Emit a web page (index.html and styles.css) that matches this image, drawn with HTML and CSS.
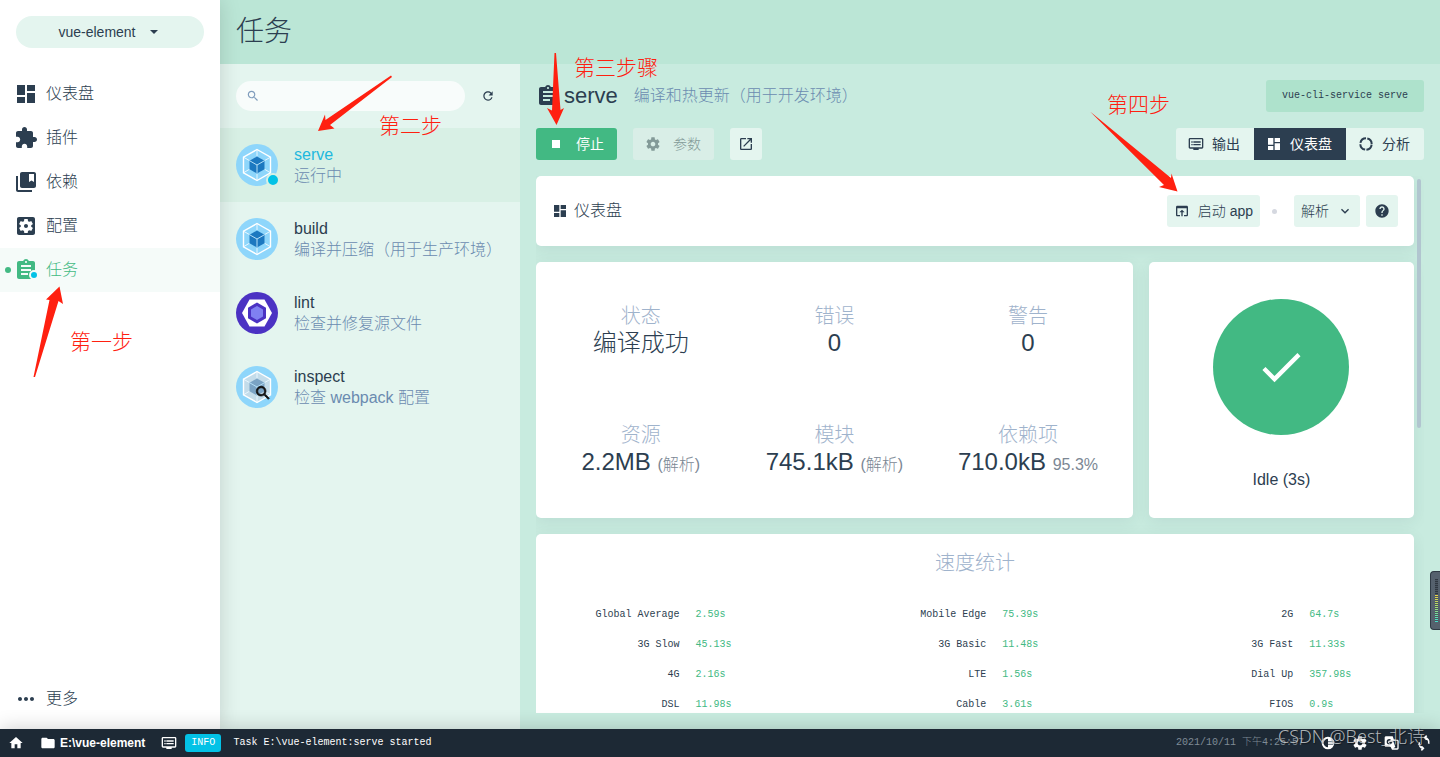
FILE: index.html
```html
<!DOCTYPE html>
<html lang="zh-CN">
<head>
<meta charset="utf-8">
<title>任务</title>
<link rel="stylesheet" href="styles.css">
</head>
<body>
<svg class="sprite" aria-hidden="true">
  <symbol id="i-dashboard" viewBox="0 0 24 24"><path d="M3 13h8V3H3v10zm0 8h8v-6H3v6zm10 0h8V11h-8v10zm0-18v6h8V3h-8z"/></symbol>
  <symbol id="i-plugin" viewBox="0 0 24 24"><path d="M20.5 11H19V7c0-1.100-.9-2-2-2h-4V3.500C13 2.120 11.880 1 10.500 1S8 2.120 8 3.500V5H4c-1.100 0-1.990.9-1.990 2v3.800H3.500c1.490 0 2.700 1.210 2.700 2.700s-1.210 2.700-2.700 2.700H2V20c0 1.100.9 2 2 2h3.800v-1.500c0-1.490 1.210-2.700 2.700-2.700 1.490 0 2.700 1.210 2.700 2.700V22H17c1.100 0 2-.9 2-2v-4h1.500c1.380 0 2.500-1.120 2.500-2.500S21.880 11 20.500 11z"/></symbol>
  <symbol id="i-deps" viewBox="0 0 24 24"><path d="M4 6H2v14c0 1.100.9 2 2 2h14v-2H4V6z"/><path d="M20 2H8c-1.100 0-2 .9-2 2v12c0 1.100.9 2 2 2h12c1.100 0 2-.9 2-2V4c0-1.100-.9-2-2-2zm0 10l-2.500-1.500L15 12V4h5v8z"/></symbol>
  <symbol id="i-config" viewBox="0 0 24 24"><path d="M12 10c-1.100 0-2 .9-2 2s.9 2 2 2 2-.9 2-2-.9-2-2-2zm7-7H5c-1.110 0-2 .9-2 2v14c0 1.100.89 2 2 2h14c1.110 0 2-.9 2-2V5c0-1.100-.89-2-2-2zm-1.750 9c0 .23-.02.46-.05.68l1.480 1.160c.13.11.17.3.08.45l-1.400 2.420c-.09.15-.27.21-.43.15l-1.740-.7c-.36.28-.76.51-1.180.69l-.26 1.850c-.03.17-.18.3-.35.3h-2.800c-.17 0-.32-.13-.35-.29l-.26-1.850c-.43-.18-.82-.41-1.180-.69l-1.740.7c-.16.06-.34 0-.43-.15l-1.400-2.420c-.09-.15-.05-.34.08-.45l1.480-1.160c-.03-.23-.05-.46-.05-.69 0-.23.02-.46.05-.68l-1.480-1.160c-.13-.11-.17-.3-.08-.45l1.400-2.420c.09-.15.27-.21.43-.15l1.740.7c.36-.28.76-.51 1.180-.69l.26-1.850c.03-.17.18-.3.35-.3h2.800c.17 0 .32.13.35.29l.26 1.850c.43.18.82.41 1.180.69l1.740-.7c.16-.06.34 0 .43.15l1.400 2.420c.09.15.05.34-.08.45l-1.480 1.160c.03.23.05.46.05.69z"/></symbol>
  <symbol id="i-task" viewBox="0 0 24 24"><path d="M19 3h-4.180C14.400 1.840 13.300 1 12 1c-1.300 0-2.400.84-2.820 2H5c-1.100 0-2 .9-2 2v14c0 1.100.9 2 2 2h14c1.100 0 2-.9 2-2V5c0-1.100-.9-2-2-2zm-7 0c.55 0 1 .45 1 1s-.45 1-1 1-1-.45-1-1 .45-1 1-1zm2 14H7v-2h7v2zm3-4H7v-2h10v2zm0-4H7V7h10v2z"/></symbol>
  <symbol id="i-more" viewBox="0 0 24 24"><path d="M6 10c-1.100 0-2 .9-2 2s.9 2 2 2 2-.9 2-2-.9-2-2-2zm12 0c-1.100 0-2 .9-2 2s.9 2 2 2 2-.9 2-2-.9-2-2-2zm-6 0c-1.100 0-2 .9-2 2s.9 2 2 2 2-.9 2-2-.9-2-2-2z"/></symbol>
  <symbol id="i-drop" viewBox="0 0 24 24"><path d="M6 9l6 6 6-6z"/></symbol>
  <symbol id="i-search" viewBox="0 0 24 24"><path d="M15.500 14h-.79l-.28-.27C15.410 12.590 16 11.110 16 9.500 16 5.910 13.090 3 9.500 3S3 5.910 3 9.500 5.910 16 9.500 16c1.610 0 3.090-.59 4.230-1.570l.27.28v.79l5 4.990L20.490 19l-4.990-5zm-6 0C7.010 14 5 11.990 5 9.500S7.010 5 9.500 5 14 7.010 14 9.500 11.990 14 9.500 14z"/></symbol>
  <symbol id="i-refresh" viewBox="0 0 24 24"><path d="M17.650 6.350C16.200 4.900 14.210 4 12 4c-4.420 0-7.990 3.580-7.990 8s3.570 8 7.990 8c3.730 0 6.840-2.550 7.730-6h-2.080c-.82 2.330-3.040 4-5.650 4-3.310 0-6-2.690-6-6s2.690-6 6-6c1.660 0 3.140.69 4.220 1.780L13 11h7V4l-2.350 2.350z"/></symbol>
  <symbol id="i-gear" viewBox="0 0 24 24"><path d="M19.430 12.980c.04-.32.07-.64.07-.98s-.03-.66-.07-.98l2.110-1.650c.19-.15.24-.42.12-.64l-2-3.460c-.12-.22-.39-.3-.61-.22l-2.490 1c-.52-.4-1.080-.73-1.690-.98l-.38-2.650C14.460 2.180 14.250 2 14 2h-4c-.25 0-.46.18-.49.42l-.38 2.650c-.61.25-1.170.59-1.690.98l-2.490-1c-.23-.09-.49 0-.61.22l-2 3.460c-.13.22-.07.49.12.64l2.110 1.650c-.04.32-.07.65-.07.98s.03.66.07.98l-2.110 1.650c-.19.15-.24.42-.12.64l2 3.460c.12.22.39.3.61.22l2.490-1c.52.4 1.080.73 1.690.98l.38 2.650c.03.24.24.42.49.42h4c.25 0 .46-.18.49-.42l.38-2.650c.61-.25 1.170-.59 1.690-.98l2.490 1c.23.09.49 0 .61-.22l2-3.460c.12-.22.07-.49-.12-.64l-2.110-1.650zM12 15.500c-1.930 0-3.500-1.570-3.500-3.500s1.570-3.500 3.500-3.500 3.500 1.570 3.500 3.500-1.570 3.500-3.500 3.500z"/></symbol>
  <symbol id="i-open" viewBox="0 0 24 24"><path d="M19 19H5V5h7V3H5c-1.110 0-2 .9-2 2v14c0 1.100.89 2 2 2h14c1.100 0 2-.9 2-2v-7h-2v7zM14 3v2h3.590l-9.830 9.830 1.410 1.410L19 6.410V10h2V3h-7z"/></symbol>
  <symbol id="i-stop" viewBox="0 0 24 24"><path d="M6 6h12v12H6z"/></symbol>
  <symbol id="i-output" viewBox="0 0 24 24"><path d="M21 3H3c-1.100 0-2 .9-2 2v12c0 1.100.9 2 2 2h5v2h8v-2h5c1.100 0 1.990-.9 1.990-2L23 5c0-1.100-.9-2-2-2zm0 14H3V5h18v12zm-2-9H8v2h11V8zm0 4H8v2h11v-2zM7 8H5v2h2V8zm0 4H5v2h2v-2z"/></symbol>
  <symbol id="i-donut" viewBox="0 0 24 24"><circle cx="12" cy="12" r="8.500" fill="none" stroke="currentColor" stroke-width="3" stroke-dasharray="11.350 2" stroke-dashoffset="-1"/></symbol>
  <symbol id="i-launch" viewBox="0 0 24 24"><path d="M19 4H5c-1.110 0-2 .9-2 2v12c0 1.100.89 2 2 2h4v-2H5V8h14v10h-4v2h4c1.100 0 2-.9 2-2V6c0-1.100-.89-2-2-2zm-7 6l-4 4h3v6h2v-6h3l-4-4z"/></symbol>
  <symbol id="i-down" viewBox="0 0 24 24"><path d="M16.590 8.590L12 13.170 7.410 8.590 6 10l6 6 6-6z"/></symbol>
  <symbol id="i-help" viewBox="0 0 24 24"><path d="M12 2C6.480 2 2 6.480 2 12s4.480 10 10 10 10-4.480 10-10S17.520 2 12 2zm1 17h-2v-2h2v2zm2.070-7.750l-.9.92C13.450 12.900 13 13.500 13 15h-2v-.5c0-1.100.45-2.100 1.170-2.830l1.240-1.260c.37-.36.59-.86.59-1.410 0-1.100-.9-2-2-2s-2 .9-2 2H8c0-2.210 1.790-4 4-4s4 1.790 4 4c0 .88-.36 1.680-.93 2.250z"/></symbol>
  <symbol id="i-check" viewBox="0 0 24 24"><path d="M9 16.170L4.830 12l-1.420 1.410L9 19 21 7l-1.410-1.410z"/></symbol>
  <symbol id="i-home" viewBox="0 0 24 24"><path d="M10 20v-6h4v6h5v-8h3L12 3 2 12h3v8z"/></symbol>
  <symbol id="i-folder" viewBox="0 0 24 24"><path d="M10 4H4c-1.100 0-1.990.9-1.990 2L2 18c0 1.100.9 2 2 2h16c1.100 0 2-.9 2-2V8c0-1.100-.9-2-2-2h-8l-2-2z"/></symbol>
  <symbol id="i-contrast" viewBox="0 0 24 24"><circle cx="12" cy="12" r="8" fill="none" stroke="currentColor" stroke-width="3"/><path d="M12 4a8 8 0 0 1 0 16z"/><path d="M12 9h8v2h-8zm0 4h8v2h-8z" fill="#7d8791"/></symbol>
  <symbol id="i-translate" viewBox="0 0 24 24"><path d="M3 2h10l2 5h5c1.100 0 2 .9 2 2v11c0 1.100-.9 2-2 2h-8l-2-4H3c-1.100 0-2-.9-2-2V4c0-1.100.9-2 2-2zm11 7l3 9-3 2h6V9h-6z"/><path d="M8 6a4 4 0 1 0 4 4H8v2h2a2.200 2.200 0 1 1-1-3.500l1.400-1.500A4 4 0 0 0 8 6z" fill="#1d2935"/></symbol>
  <symbol id="i-cube" viewBox="0 0 42 42">
    <circle cx="21" cy="21" r="21" fill="#8ed6fb"/>
    <path class="cube-shell" d="M21 5.500l13.500 7.700v15.600L21 36.500 7.500 28.800V13.200z"/>
    <path d="M21 5.500V12M21 30v6.500M7.500 13.200l6 3.400M34.500 13.200l-6 3.400M7.500 28.800l6-3.600M34.500 28.800l-6-3.600" fill="none" stroke="#e8f7ff" stroke-width="1"/>
    <path class="cube-core" d="M21 12.500l7.500 4.200v8.600L21 29.500l-7.500-4.200v-8.600z"/>
    <path d="M13.500 16.700L21 21l7.500-4.300M21 21v8.500" fill="none" stroke="#b5e0f8" stroke-width="1"/>
    <path d="M21 5.500l13.500 7.700v15.600L21 36.500 7.500 28.800V13.200z" fill="none" stroke="#fff" stroke-width="1.400"/>
  </symbol>
</svg>

<div class="app">
  <div class="workspace">
    <nav class="sidebar">
      <button class="project">vue-element<svg class="icon s16"><use href="#i-drop"/></svg></button>
      <a class="nav-link" href="#"><svg class="icon s24"><use href="#i-dashboard"/></svg>仪表盘</a>
      <a class="nav-link" href="#"><svg class="icon s24"><use href="#i-plugin"/></svg>插件</a>
      <a class="nav-link" href="#"><svg class="icon s24"><use href="#i-deps"/></svg>依赖</a>
      <a class="nav-link" href="#"><svg class="icon s24"><use href="#i-config"/></svg>配置</a>
      <a class="nav-link active" href="#"><span class="badge-box"><svg class="icon s24"><use href="#i-task"/></svg><i class="badge small"></i></span>任务</a>
      <a class="nav-link last" href="#"><svg class="icon s24"><use href="#i-more"/></svg>更多</a>
    </nav>

    <div class="page">
      <header class="page-head"><h1>任务</h1></header>
      <div class="page-body">
        <aside class="tasks">
          <div class="toolbar">
            <label class="search"><svg class="icon s16"><use href="#i-search"/></svg><input type="text" aria-label="搜索"></label>
            <button class="plain" aria-label="刷新"><svg class="icon s16"><use href="#i-refresh"/></svg></button>
          </div>
          <a class="task selected" href="#"><span class="badge-box"><svg class="logo"><use href="#i-cube"/></svg><i class="badge"></i></span><span class="task-text"><b>serve</b><span>运行中</span></span></a>
          <a class="task" href="#"><svg class="logo"><use href="#i-cube"/></svg><span class="task-text"><b>build</b><span>编译并压缩（用于生产环境）</span></span></a>
          <a class="task" href="#"><svg class="logo" viewBox="0 0 42 42"><circle cx="21" cy="21" r="21" fill="#4b32c3"/><path d="M13.500 7.500h15L36 21l-7.500 13.500h-15L6 21z" fill="#fff"/><path d="M21 10.500l9 5.200v10.600l-9 5.200-9-5.200V15.700z" fill="#4b32c3"/><path d="M21 14l6 3.500v7L21 28l-6-3.500v-7z" fill="#8080f2"/></svg><span class="task-text"><b>lint</b><span>检查并修复源文件</span></span></a>
          <a class="task" href="#"><span class="badge-box"><svg class="logo muted"><use href="#i-cube"/></svg><svg class="icon s16 lens"><use href="#i-search"/></svg></span><span class="task-text"><b>inspect</b><span>检查 webpack 配置</span></span></a>
        </aside>

        <main class="detail">
          <div class="title-row">
            <svg class="icon s24"><use href="#i-task"/></svg>
            <h2>serve</h2>
            <p>编译和热更新（用于开发环境）</p>
            <code>vue-cli-service serve</code>
          </div>
          <div class="actions">
            <button class="btn primary"><svg class="icon s16"><use href="#i-stop"/></svg>停止</button>
            <button class="btn" disabled><svg class="icon s16"><use href="#i-gear"/></svg>参数</button>
            <button class="btn square" aria-label="打开"><svg class="icon s16"><use href="#i-open"/></svg></button>
            <div class="tabs">
              <button class="btn"><svg class="icon s16"><use href="#i-output"/></svg>输出</button>
              <button class="btn current"><svg class="icon s16"><use href="#i-dashboard"/></svg>仪表盘</button>
              <button class="btn"><svg class="icon s16"><use href="#i-donut"/></svg>分析</button>
            </div>
          </div>
          <div class="scroller">
            <div class="cards">
              <section class="card board-head">
                <svg class="icon s16"><use href="#i-dashboard"/></svg>
                <h3>仪表盘</h3>
                <button class="btn tight"><svg class="icon s16"><use href="#i-launch"/></svg>启动 app</button>
                <i class="dot"></i>
                <button class="btn tight">解析<svg class="icon s16"><use href="#i-down"/></svg></button>
                <button class="btn square" aria-label="帮助"><svg class="icon s16"><use href="#i-help"/></svg></button>
              </section>
              <section class="card stats">
                <div><h4>状态</h4><p>编译成功</p></div>
                <div><h4>错误</h4><p>0</p></div>
                <div><h4>警告</h4><p>0</p></div>
                <div><h4>资源</h4><p>2.2MB <small>(解析)</small></p></div>
                <div><h4>模块</h4><p>745.1kB <small>(解析)</small></p></div>
                <div><h4>依赖项</h4><p>710.0kB <small>95.3%</small></p></div>
              </section>
              <section class="card status">
                <div class="disc"><svg class="icon tick"><use href="#i-check"/></svg></div>
                <p>Idle (3s)</p>
              </section>
              <section class="card speed">
                <h4>速度统计</h4>
                <table>
                  <colgroup><col class="c-name"><col class="c-time"><col class="c-name"><col class="c-time"><col class="c-name"><col></colgroup>
                  <tbody>
                  <tr><th>Global Average</th><td>2.59s</td><th>Mobile Edge</th><td>75.39s</td><th>2G</th><td>64.7s</td></tr>
                  <tr><th>3G Slow</th><td>45.13s</td><th>3G Basic</th><td>11.48s</td><th>3G Fast</th><td>11.33s</td></tr>
                  <tr><th>4G</th><td>2.16s</td><th>LTE</th><td>1.56s</td><th>Dial Up</th><td>357.98s</td></tr>
                  <tr><th>DSL</th><td>11.98s</td><th>Cable</th><td>3.61s</td><th>FIOS</th><td>0.9s</td></tr>
                  </tbody>
                </table>
              </section>
            </div>
            <div class="track"><i class="thumb"></i></div>
          </div>
        </main>
      </div>
    </div>
  </div>

  <footer class="statusbar">
    <a href="#" aria-label="主页"><svg class="icon s16"><use href="#i-home"/></svg></a>
    <a class="path" href="#"><svg class="icon s16"><use href="#i-folder"/></svg>E:\vue-element</a>
    <a class="log" href="#"><svg class="icon s16"><use href="#i-output"/></svg><span class="info">INFO</span><span>Task E:\vue-element:serve started</span></a>
    <time>2021/10/11 下午4:25:57</time>
    <span class="tools">
      <svg class="icon s16"><use href="#i-contrast"/></svg>
      <svg class="icon s16"><use href="#i-gear"/></svg>
      <svg class="icon s16"><use href="#i-translate"/></svg>
      <svg class="icon s16" viewBox="0 0 24 24"><path d="M5 11a7 7 0 0 0 6 9M8 17l3 3-3 3M19 13a7 7 0 0 0-6-9M16 1l-3 3 3 3" fill="none" stroke="currentColor" stroke-width="2.500"/></svg>
    </span>
  </footer>
</div>

<svg class="arrows" viewBox="0 0 1440 757" aria-hidden="true">
  <path d="M33.500 377L49.500 300 46 299.500 59.500 286.500 63 304 58.500 301 35 377z"/>
  <path d="M391 75.500l1 1.500L330 125l4.500 3.500L318 131l7-16.500.5 5.500z"/>
  <path d="M554.500 53h1.500l4.500 57 3.500-2-7.500 17-9.500-17 5 2.500z"/>
  <path d="M1090 111.500L1171 178l.5-4.500 6 18-18.500-4.500 5-2z"/>
</svg>
<span class="note n1">第一步</span>
<span class="note n2">第二步</span>
<span class="note n3">第三步骤</span>
<span class="note n4">第四步</span>
<div class="meter"><i></i></div>
<span class="watermark">CSDN @Best_北诗</span>
</body>
</html>
```
FILE: styles.css
```css
* { box-sizing: border-box; }

body {
  margin: 0;
  color: #2c3e50;
  font: 300 16px/22px "Liberation Sans", "Noto Sans CJK SC", sans-serif;
}

h1, h2, h3, h4, p { margin: 0; font-weight: 300; }
a { color: inherit; text-decoration: none; }
button, input { font: inherit; color: inherit; border: 0; background: none; padding: 0; }

.sprite { position: absolute; width: 0; height: 0; }
.icon { fill: currentColor; flex: none; display: block; }
.s16 { width: 16px; height: 16px; }
.s24 { width: 24px; height: 24px; }

.app { display: flex; flex-direction: column; height: 100vh; overflow: hidden; }
.workspace { flex: 1; min-height: 0; display: flex; }

.sidebar {
  width: 220px;
  flex: none;
  display: flex;
  flex-direction: column;
  background: #fff;
  box-shadow: 0 0 20px rgba(0, 0, 0, .15);
  z-index: 1;
}
.project {
  display: flex;
  align-items: center;
  justify-content: center;
  gap: 10px;
  height: 32px;
  margin: 16px 16px 24px;
  border-radius: 16px;
  background: #e4f5ef;
  font-size: 14px;
}
.nav-link {
  position: relative;
  display: flex;
  align-items: center;
  gap: 8px;
  height: 44px;
  padding: 0 14px;
}
.nav-link.active { color: #42b983; background: #f5fbf9; }
.nav-link.active::before {
  content: "";
  position: absolute;
  left: 5px;
  width: 6px;
  height: 6px;
  border-radius: 50%;
  background: #42b983;
}
.nav-link.last { margin: auto 0 8px; }

.badge-box { position: relative; flex: none; }
.badge {
  position: absolute;
  right: -2px;
  bottom: -1px;
  width: 14px;
  height: 14px;
  border: 2px solid #d8f0e5;
  border-radius: 50%;
  background: #03c2e6;
}
.badge.small { right: -1px; bottom: 2px; width: 10px; height: 10px; border-color: #f5fbf9; }

.page { flex: 1; min-width: 0; display: flex; flex-direction: column; background: #c8ebdf; }
.page-head { flex: none; display: flex; align-items: center; height: 64px; padding: 0 16px; background: #bbe6d6; }
.page-head h1 { font-size: 28px; line-height: 36px; }
.page-body { flex: 1; min-height: 0; display: flex; }

.tasks { width: 300px; flex: none; background: #e4f5ef; }
.toolbar { display: flex; align-items: center; justify-content: space-between; height: 64px; padding: 0 16px; }
.search {
  display: flex;
  align-items: center;
  gap: 8px;
  width: 229px;
  height: 30px;
  padding: 0 10px;
  border-radius: 15px;
  background: #f8fcfb;
  color: #7f9cbc;
}
.search input { flex: 1; min-width: 0; outline: 0; }
.search .icon { width: 14px; height: 14px; }
.plain { padding: 8px; }
.plain .icon { width: 14px; height: 14px; }
.toolbar .plain { margin-right: 1px; }
.task { display: flex; align-items: center; gap: 16px; height: 74px; padding: 0 16px; }
.task.selected { background: #d8f0e5; }
.logo { display: block; width: 42px; height: 42px; flex: none; --shell: #8ed6fb; --core: #1c78c0; }
.logo.muted { --shell: #c3dcea; --core: #7aa3c4; }
.cube-shell { fill: var(--shell); }
.cube-core { fill: var(--core); }
.lens { position: absolute; right: 6px; bottom: 6px; width: 18px; height: 18px; color: #111; stroke: #111; }
.task-text { min-width: 0; line-height: 21px; }
.task-text b, .task-text span { display: block; font-weight: 300; }
.task-text span { color: #6b8bb0; white-space: nowrap; overflow: hidden; text-overflow: ellipsis; }
.selected b { color: #1fb8de; }

.detail { flex: 1; min-width: 0; display: flex; flex-direction: column; padding: 16px 16px 16px; }
.title-row { display: flex; align-items: center; height: 32px; }
.title-row h2 { margin: 0 16px 0 4px; font-size: 22px; line-height: 28px; }
.title-row p { color: #6b8bb0; }
.title-row code {
  margin-left: auto;
  padding: 0 16px;
  border-radius: 3px;
  background: #aee2cc;
  font: 10px/32px "Liberation Mono", monospace;
}
.actions { display: flex; gap: 16px; margin: 16px 0; }
.btn {
  display: flex;
  align-items: center;
  justify-content: center;
  gap: 12px;
  height: 32px;
  padding: 0 13px 0 12px;
  border-radius: 3px;
  background: #e4f5ef;
  font-size: 14px;
  white-space: nowrap;
}
.btn.primary { background: #42b983; color: #fff; font-weight: 400; }
.btn:disabled { background: #d9eee7; color: #839a98; }
.btn.square { width: 32px; padding: 0; }
.btn.tight { gap: 8px; padding: 0 7px; }
.tabs { display: flex; margin-left: auto; }
.tabs .btn { border-radius: 0; padding: 0 14px 0 12px; gap: 8px; }
.tabs .btn:first-child { border-radius: 3px 0 0 3px; }
.tabs .btn:last-child { border-radius: 0 3px 3px 0; }
.tabs .btn { gap: 8px; min-width: 78px; font-weight: 400; }
.tabs .current { background: #2c3e50; color: #fff; }

.scroller { flex: 1; min-height: 0; display: flex; overflow: hidden; gap: 3px; }
.cards {
  flex: 1;
  min-width: 0;
  display: grid;
  grid-template-columns: 9fr 4fr;
  gap: 16px;
  align-content: start;
}
.card { background: #fff; border-radius: 5px; box-shadow: 0 4px 16px rgba(44, 62, 80, .08); }
.track { width: 7px; padding-top: 3px; }
.thumb { display: block; width: 4px; height: 249px; border-radius: 2px; background: #b1c5cf; }

.board-head { grid-column: 1 / -1; display: flex; align-items: center; height: 70px; padding: 0 16px; }
.board-head h3 { margin: 0 auto 0 6px; font-size: 16px; }
.dot { width: 5px; height: 5px; margin: 0 17px 0 12px; border-radius: 50%; background: #d5d8e0; }
.board-head .square { margin-left: 6px; }

.stats { display: grid; grid-template: repeat(2, 120px) / repeat(3, 1fr); align-items: center; padding: 8px; text-align: center; }
h4 { color: #9fb3cc; font-size: 20px; line-height: 26px; }
.stats p { font-size: 24px; line-height: 28px; }
.stats small { color: #7b8794; font-size: 16px; }

.status { display: flex; flex-direction: column; align-items: center; padding-top: 37px; gap: 34px; }
.disc { display: flex; align-items: center; justify-content: center; width: 136px; height: 136px; border-radius: 50%; background: #42b983; }
.tick { width: 52px; height: 52px; color: #fff; }

.speed { grid-column: 1 / -1; padding-top: 16px; text-align: center; }
.speed table { width: 100%; margin-top: 24px; table-layout: fixed; border-collapse: collapse; font: 10px/14px "Liberation Mono", monospace; }
.c-name { width: 17.25%; }
.c-time { width: 17.7%; }
.speed th, .speed td { height: 30px; padding: 0 8px; }
.speed th { font-weight: 400; text-align: right; white-space: nowrap; }
.speed td { color: #42b983; text-align: left; }

.statusbar {
  flex: none;
  z-index: 2;
  display: flex;
  align-items: center;
  gap: 16px;
  height: 28px;
  padding: 0 8px;
  background: #1d2935;
  color: #fff;
  font-size: 12px;
  box-shadow: 0 0 20px rgba(0, 0, 0, .2);
}
.path, .log, .tools { display: flex; align-items: center; }
.path { gap: 4px; font-weight: 700; }
.log { gap: 8px; font: 10px/18px "Liberation Mono", monospace; }
.log span + span { margin-left: 4px; }
.info { padding: 0 6px; border-radius: 3px; background: #03c2e6; }
.statusbar time { margin-left: auto; color: #7f8b96; font: 300 10px/18px "Liberation Mono", "Noto Sans CJK SC", monospace; }
.tools { gap: 16px; }
.tools .icon { width: 16px; }

.arrows { position: absolute; left: 0; top: 0; width: 1440px; height: 757px; z-index: 3; fill: #ff2010; pointer-events: none; }
.note { position: absolute; z-index: 3; color: #ff2010; font-size: 21px; line-height: 28px; }
.n1 { left: 70px; top: 328px; }
.n2 { left: 379px; top: 112px; }
.n3 { left: 574px; top: 54px; }
.n4 { left: 1107px; top: 91px; }

.meter {
  position: absolute;
  z-index: 3;
  right: 0;
  top: 571px;
  width: 10px;
  height: 59px;
  padding: 7px 2px 7px 4px;
  border: solid #2f3a44;
  border-width: 1px 0 1px 1px;
  border-radius: 4px 0 0 4px;
  background: #55616d;
}
.meter i {
  display: block;
  height: 100%;
  background:
    repeating-linear-gradient(transparent 0 1px, #4a5560 1px 2px),
    linear-gradient(#2f3740 0 35%, #f0d040 36%, #a5e070 65%, #40e0d0);
}
.watermark {
  position: absolute;
  z-index: 3;
  right: 15px;
  bottom: 7px;
  color: rgba(215, 218, 220, .8);
  font: 300 18px/28px "Noto Sans", "Noto Sans CJK SC", sans-serif;
  text-shadow: 1px 1px 1px rgba(0, 0, 0, .4);
}
```
